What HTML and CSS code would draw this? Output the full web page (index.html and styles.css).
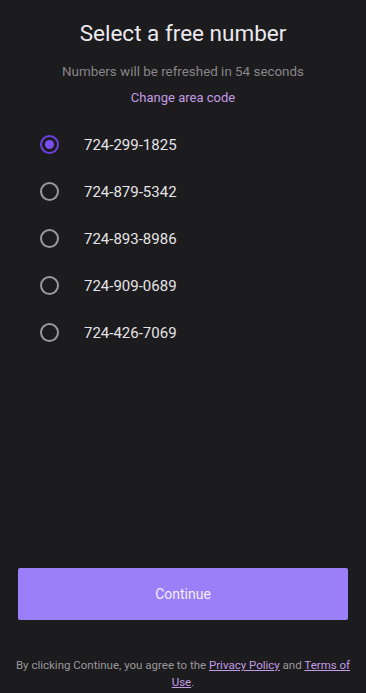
FILE: index.html
```html
<!DOCTYPE html>
<html lang="en">
<head>
  <meta charset="UTF-8" />
  <meta name="viewport" content="width=device-width, initial-scale=1.0"/>
  <title>Select a free number</title>
  <link rel="stylesheet" href="styles.css">
</head>
<body>
  <div class="page">
    <div class="top">
      <h1>Select a free number</h1>
      <p class="refresh">Numbers will be refreshed in 54 seconds</p>
      <a class="area-link" href="#">Change area code</a>

      <ul class="numbers">
        <li class="number selected"><span class="radio"></span>724-299-1825</li>
        <li class="number"><span class="radio"></span>724-879-5342</li>
        <li class="number"><span class="radio"></span>724-893-8986</li>
        <li class="number"><span class="radio"></span>724-909-0689</li>
        <li class="number"><span class="radio"></span>724-426-7069</li>
      </ul>
    </div>

    <div class="bottom">
      <button class="continue-btn">Continue</button>
      <p class="terms">By clicking Continue, you agree to the <a href="#">Privacy Policy</a> and <a href="#">Terms of Use</a>.</p>
    </div>
  </div>
</body>
</html>
```

FILE: styles.css
```css
body {
  margin: 0;
  background: #1c1b1d;
  font-family: Roboto, "Noto Sans", sans-serif;
  color: #e6e4e8;
}

.page {
  height: 693px;
  display: flex;
  flex-direction: column;
  justify-content: space-between;
}

.top {
  text-align: center;
  padding-top: 19px;
}

h1 {
  margin: 0;
  font-size: 22.5px;
  font-weight: 400;
  color: #ebe9ee;
  line-height: 28px;
}

.refresh {
  margin: 16px 0 0;
  font-size: 13.4px;
  color: #88868a;
  line-height: 18px;
}

.area-link {
  display: inline-block;
  margin-top: 8px;
  font-size: 13px;
  line-height: 18px;
  color: #c49be6;
  text-decoration: none;
}

.numbers {
  list-style: none;
  margin: 14px 0 0;
  padding: 0 0 0 40px;
  text-align: left;
}

.number {
  display: flex;
  align-items: center;
  gap: 25px;
  height: 47px;
  font-size: 15px;
  color: #e6e4e8;
}

.radio {
  box-sizing: border-box;
  width: 19px;
  height: 19px;
  border-radius: 50%;
  border: 2px solid #9a989c;
  display: flex;
  align-items: center;
  justify-content: center;
}

.selected .radio {
  border-color: #6b3fe0;
}

.selected .radio::after {
  content: "";
  width: 9px;
  height: 9px;
  border-radius: 50%;
  background: #7b4ff2;
}

.bottom {
  padding: 0 18px 3px;
  text-align: center;
}

.continue-btn {
  width: 100%;
  height: 52px;
  border: none;
  border-radius: 2px;
  background: #9a7ff8;
  color: #f4eeff;
  font-family: inherit;
  font-size: 14px;
  cursor: pointer;
}

.terms {
  margin: 37px -6px 0;
  font-size: 11.5px;
  line-height: 16.5px;
  color: #9a989c;
}

.terms a {
  color: #c49be6;
}
```
